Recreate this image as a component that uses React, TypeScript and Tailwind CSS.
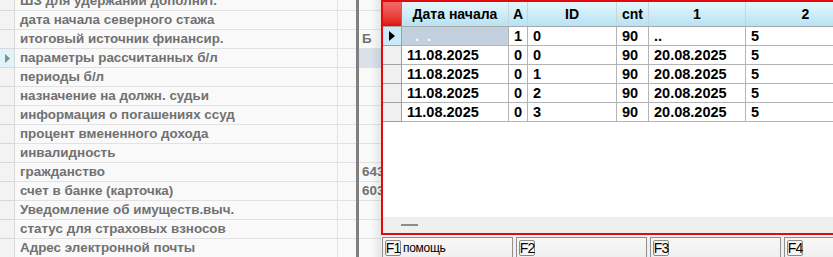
import React from "react";

const labels = [
  "ШЗ для удержаний дополнит.",
  "дата начала северного стажа",
  "итоговый источник финансир.",
  "параметры рассчитанных б/л",
  "периоды б/л",
  "назначение на должн. судьи",
  "информация о погашениях ссуд",
  "процент вмененного дохода",
  "инвалидность",
  "гражданство",
  "счет в банке (карточка)",
  "Уведомление об имуществ.выч.",
  "статус для страховых взносов",
  "Адрес электронной почты",
];

const vals: Record<number, string> = { 2: "Б", 9: "643", 10: "603" };

const rows = [
  { sel: true, d: "", a: "1", id: "0", cnt: "90", c1: "..", c2: "5" },
  { sel: false, d: "11.08.2025", a: "0", id: "0", cnt: "90", c1: "20.08.2025", c2: "5" },
  { sel: false, d: "11.08.2025", a: "0", id: "1", cnt: "90", c1: "20.08.2025", c2: "5" },
  { sel: false, d: "11.08.2025", a: "0", id: "2", cnt: "90", c1: "20.08.2025", c2: "5" },
  { sel: false, d: "11.08.2025", a: "0", id: "3", cnt: "90", c1: "20.08.2025", c2: "5" },
];

function Tri({ color, w, h }: { color: string; w: number; h: number }) {
  return (
    <svg width={w} height={h} viewBox={`0 0 ${w} ${h}`}>
      <polygon points={`0,0 ${w},${h / 2} 0,${h}`} fill={color} />
    </svg>
  );
}

function Key({ k, label }: { k: string; label?: string }) {
  return (
    <div className="w-[131px] shrink-0 h-full border border-b-0 border-[#909090] bg-gradient-to-b from-[#f8f8f8] to-[#efefef] flex items-start pl-[2px] pt-[2px]">
      <div className="w-[16px] h-[16px] border border-[#8a8a8a] rounded-[2px] bg-[#f6f6f6] text-[14px] leading-[14px] text-black tracking-[-1px] flex items-center justify-center">
        {k}
      </div>
      {label && (
        <span className="ml-[2px] text-[12px] leading-[17px] text-black tracking-[-0.3px]">{label}</span>
      )}
    </div>
  );
}

export default function App() {
  const cell = "shrink-0 border-r border-b border-[#b4b4b4] pl-[5px] text-[14.5px] font-bold text-black leading-[18px] whitespace-nowrap overflow-hidden";
  const hcell = "shrink-0 border-r border-[#c8d4da] text-[14px] font-bold text-black leading-[24px] text-center whitespace-nowrap overflow-hidden";
  const lbl = "text-[13.4px] font-bold text-[#717171] leading-[18px] whitespace-nowrap overflow-hidden";
  return (
    <div className="w-[833px] h-[257px] overflow-hidden flex bg-[#f9f9f9] font-['Liberation_Sans',Arial,sans-serif]">
      {/* left property grid */}
      <div className="relative w-[381px] shrink-0 h-full overflow-hidden">
        <div className="-mt-[8px]">
          {labels.map((l, i) => (
            <div key={i} className="flex h-[19px]">
              <div
                className={
                  i === 3
                    ? "w-[15px] shrink-0 border-r border-b border-[#d8d8d8] bg-[#dff3fb] flex items-center justify-center"
                    : "w-[15px] shrink-0 border-r border-b border-[#d8d8d8] bg-[#f3f3f3]"
                }
              >
                {i === 3 && <Tri color="#8c8c8c" w={5} h={9} />}
              </div>
              <div className={`w-[323px] shrink-0 border-r border-b border-[#e2e2e2] pl-[5px] ${lbl}`}>
                {l}
              </div>
              <div className="w-[18px] shrink-0 border-b border-[#e2e2e2]" />
              <div className="w-[3px] shrink-0 bg-[#808080]" />
              <div
                className={
                  i === 3
                    ? `w-[22px] shrink-0 border-b border-[#e2e2e2] bg-[#d9e1ea] pl-[3px] ${lbl}`
                    : `w-[22px] shrink-0 border-b border-[#e2e2e2] pl-[3px] ${lbl}`
                }
              >
                {vals[i] ?? ""}
              </div>
            </div>
          ))}
        </div>
        <div className="absolute right-0 top-0 w-[10px] h-full bg-gradient-to-r from-transparent to-[#00000014]" />
      </div>

      {/* popup window */}
      <div className="flex-1 flex flex-col h-full bg-[#f0f0f0]">
        <div className="h-[235px] shrink-0 border-2 border-r-0 border-[#e20a0a] bg-white flex flex-col">
          {/* header */}
          <div className="flex h-[25px] shrink-0 border-b border-[#a8a8a8]">
            <div className="w-[19px] shrink-0 border-r border-[#c06060] bg-gradient-to-b from-[#f26a6a] to-[#e00808]" />
            <div className="flex bg-gradient-to-b from-[#e6f7fd] to-[#b6e2f4] flex-1">
              <div className={`${hcell} w-[107px]`}>Дата начала</div>
              <div className={`${hcell} w-[19px]`}>A</div>
              <div className={`${hcell} w-[89px]`}>ID</div>
              <div className={`${hcell} w-[32px]`}>cnt</div>
              <div className={`${hcell} w-[97px]`}>1</div>
              <div className={`${hcell} w-[120px]`}>2</div>
            </div>
          </div>
          {/* rows */}
          {rows.map((r, i) => (
            <div key={i} className="flex h-[19px] shrink-0">
              <div
                className={
                  r.sel
                    ? "w-[19px] shrink-0 border-r border-b border-[#a0a0a0] bg-[#cbe9f8] flex items-center justify-center"
                    : "w-[19px] shrink-0 border-r border-b border-[#a0a0a0] bg-[#f0f0f0]"
                }
              >
                {r.sel && <Tri color="#000000" w={6} h={10} />}
              </div>
              {r.sel ? (
                <div className={`${cell} w-[107px] bg-[#c3d0dd] text-white pl-[13px]`}>.&nbsp;&nbsp;.</div>
              ) : (
                <div className={`${cell} w-[107px]`}>{r.d}</div>
              )}
              <div className={`${cell} w-[19px]`}>{r.a}</div>
              <div className={`${cell} w-[89px] pl-[3px]`}>{r.id}</div>
              <div className={`${cell} w-[32px] pl-[4px]`}>{r.cnt}</div>
              <div className={`${cell} w-[97px] pl-[4px]`}>{r.c1}</div>
              <div className={`${cell} w-[120px] pl-[4px]`}>{r.c2}</div>
            </div>
          ))}
          <div className="flex-1" />
          <div className="h-[16px] shrink-0 bg-[#efefef] relative">
            <div className="absolute left-[18px] top-[7px] w-[17px] h-[2px] bg-[#8c8c8c]" />
          </div>
        </div>
        {/* status bar */}
        <div className="flex-1 flex gap-[3px] pt-[2px] pl-[1px] overflow-hidden">
          <Key k="F1" label="помощь" />
          <Key k="F2" />
          <Key k="F3" />
          <Key k="F4" />
        </div>
      </div>
    </div>
  );
}
